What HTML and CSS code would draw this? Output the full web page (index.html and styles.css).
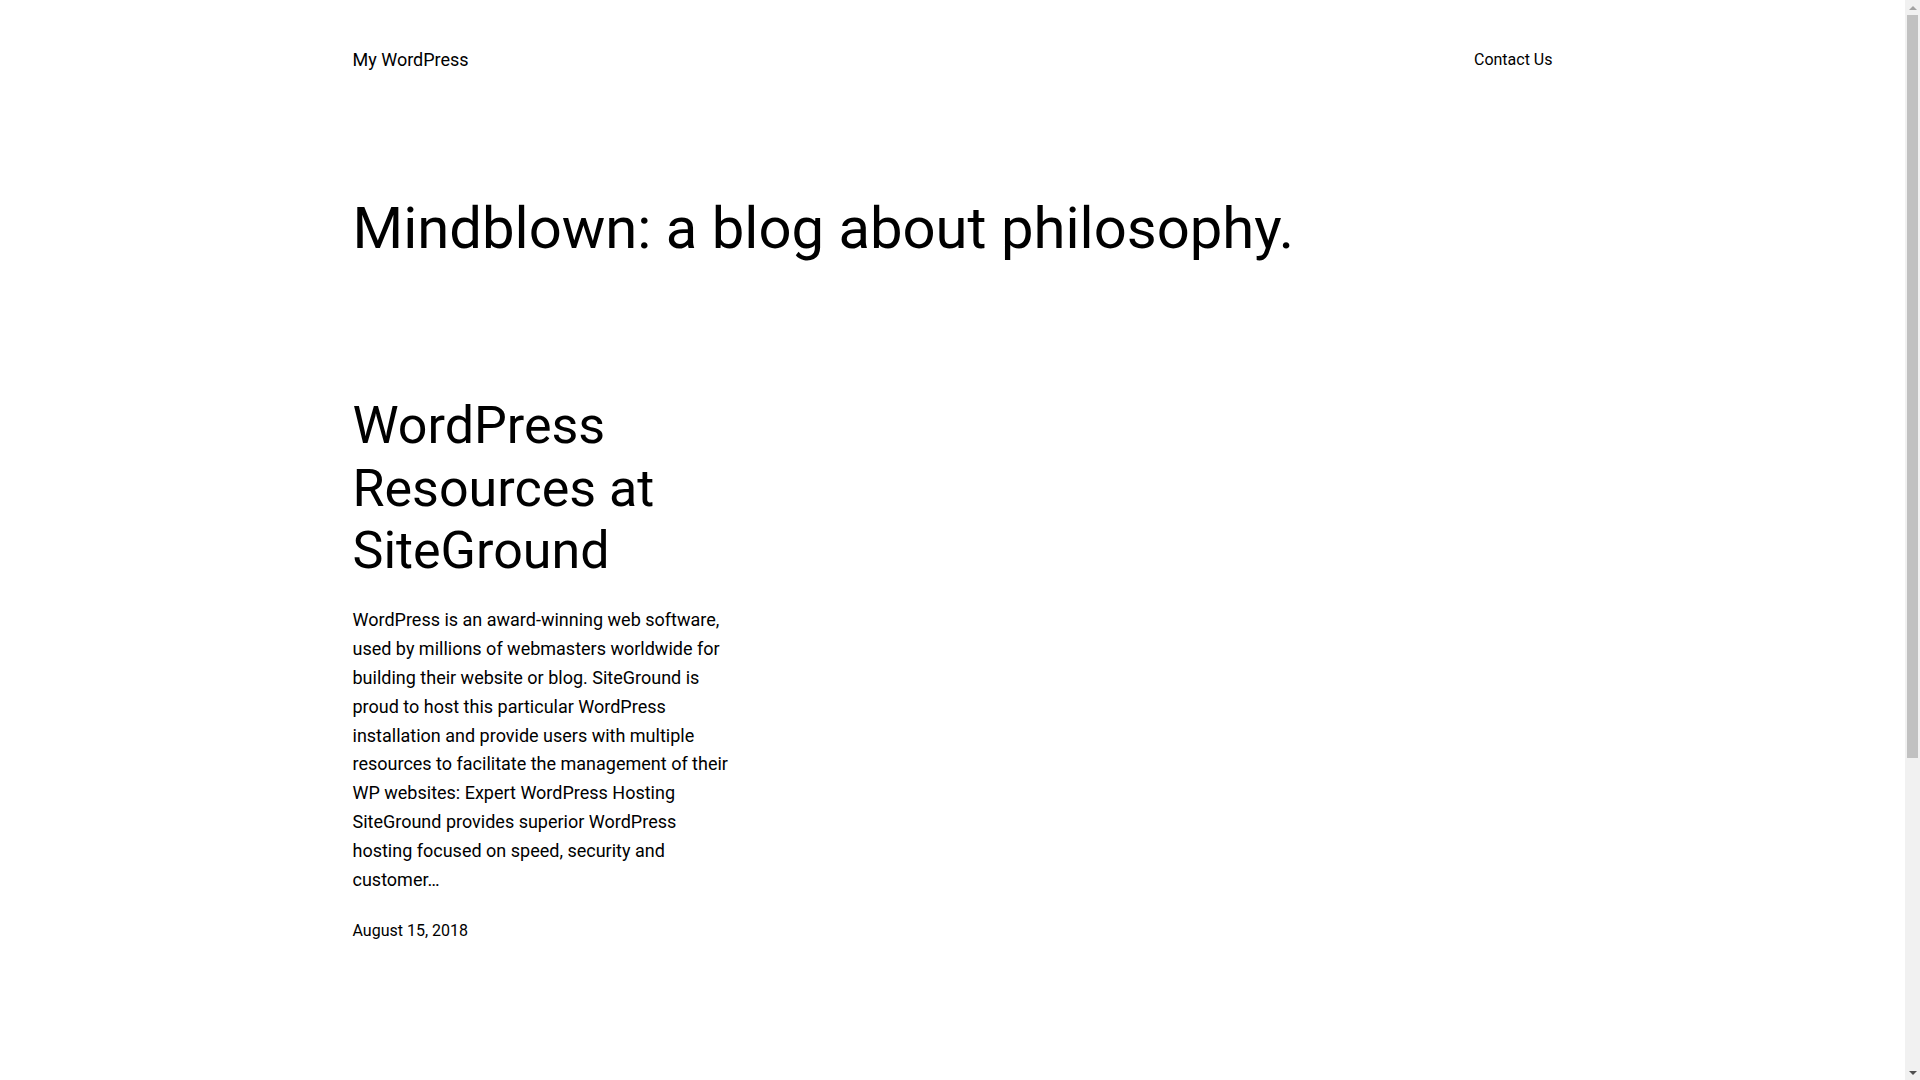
FILE: index.html
```html
<!DOCTYPE html>
<html lang="en">
<head>
<meta charset="utf-8">
<title>My WordPress</title>
<link rel="stylesheet" href="styles.css">
</head>
<body>
<div class="page">
  <header class="site-header">
    <a class="site-title" href="#">My WordPress</a>
    <nav class="site-nav"><a href="#">Contact Us</a></nav>
  </header>
  <main class="site-main">
    <h1 class="page-heading">Mindblown: a blog about philosophy.</h1>
    <div class="post-grid">
      <article class="post">
        <h2 class="post-title"><a href="#">WordPress Resources at SiteGround</a></h2>
        <p class="post-excerpt">WordPress is an award-winning web software, used by millions of webmasters worldwide for building their website or blog. SiteGround is proud to host this particular WordPress installation and provide users with multiple resources to facilitate the management of their WP websites: Expert WordPress Hosting SiteGround provides superior WordPress hosting focused on speed, security and customer…</p>
        <div class="post-date">August 15, 2018</div>
      </article>
      <div class="post-empty"></div>
      <div class="post-empty"></div>
    </div>
  </main>
</div>
<div class="scrollbar" aria-hidden="true">
  <span class="sb-arrow sb-up"></span>
  <span class="sb-thumb"></span>
  <span class="sb-arrow sb-down"></span>
</div>
</body>
</html>
```
FILE: styles.css
```css
html, body {
  margin: 0;
  padding: 0;
  background: #ffffff;
  color: #000000;
}
body {
  font-family: Roboto, "Liberation Sans", sans-serif;
  font-size: 18px;
  line-height: 1.6;
  padding-right: 15px;
}
a {
  color: inherit;
  text-decoration: none;
}
.page {
  width: 1200px;
  margin: 0 auto;
  padding-bottom: 582px;
}
.site-header {
  display: flex;
  justify-content: space-between;
  align-items: center;
  padding-top: 46px;
  height: 28.8px;
}
.site-title {
  font-size: 18px;
  line-height: 28.8px;
}
.site-nav {
  font-size: 16px;
  line-height: 28.8px;
}
.page-heading {
  margin: 118.5px 0 0 0;
  font-size: 58px;
  font-weight: 400;
  line-height: 70px;
}
.post-grid {
  display: grid;
  grid-template-columns: repeat(3, 1fr);
  gap: 24px;
  margin-top: 132px;
}
.post-title {
  margin: 0;
  font-size: 52px;
  font-weight: 400;
  line-height: 1.2;
}
.post-excerpt {
  margin: 24px 0 0 0;
  font-size: 18px;
  line-height: 28.8px;
}
.post-date {
  margin-top: 24px;
  font-size: 16px;
  line-height: 25.6px;
}

/* classic browser scrollbar, drawn over the right edge */
.scrollbar {
  position: fixed;
  top: 0;
  right: 0;
  width: 15px;
  height: 100vh;
  background: #f1f1f1;
  display: flex;
  flex-direction: column;
  align-items: center;
}
.sb-arrow {
  flex: 0 0 15px;
  width: 15px;
  display: flex;
  justify-content: center;
  align-items: center;
}
.sb-arrow::before {
  content: "";
  width: 0;
  height: 0;
  border-left: 4px solid transparent;
  border-right: 4px solid transparent;
}
.sb-up::before {
  border-bottom: 4px solid #a3a3a3;
}
.sb-down {
  margin-top: auto;
}
.sb-down::before {
  border-top: 4px solid #505050;
}
.sb-thumb {
  width: 11px;
  height: 743px;
  background: #c1c1c1;
}
```
